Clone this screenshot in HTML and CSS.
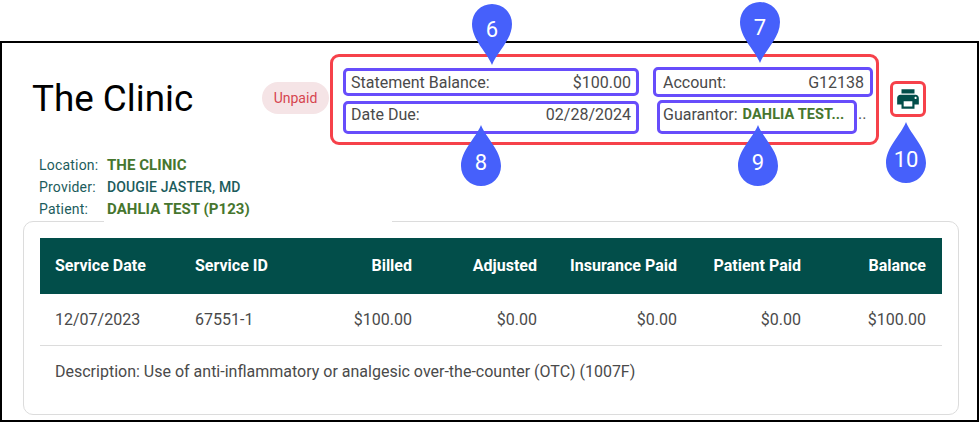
FILE: index.html
```html
<!DOCTYPE html>
<html lang="en">
<head>
<meta charset="utf-8">
<title>The Clinic</title>
<link rel="stylesheet" href="styles.css">
</head>
<body>
<main class="frame">
  <header class="header">
    <div class="intro">
      <div class="title-row">
        <h1 class="title">The Clinic</h1>
        <span class="pill">Unpaid</span>
      </div>
      <div class="meta">
        <div class="meta-labels">
          <div>Location:</div>
          <div>Provider:</div>
          <div>Patient:</div>
        </div>
        <div class="meta-values">
          <div class="green">THE CLINIC</div>
          <div class="teal">DOUGIE JASTER, MD</div>
          <div class="green">DAHLIA TEST (P123)</div>
        </div>
      </div>
    </div>
    <section class="summary">
      <div class="field field-balance"><span>Statement Balance:</span><span>$100.00</span></div>
      <div class="field field-account"><span>Account:</span><span>G12138</span></div>
      <div class="field field-due"><span>Date Due:</span><span>02/28/2024</span></div>
      <div class="guarantor-wrap">
        <div class="field field-guarantor"><span>Guarantor:</span><strong class="guarantor-name">DAHLIA TEST...</strong></div>
        <span class="overflow-dots">..</span>
      </div>
    </section>
    <button class="print" type="button" aria-label="Print">
      <svg class="print-icon" viewBox="0 0 24 24" aria-hidden="true"><path d="M19 8H5c-1.66 0-3 1.34-3 3v6h4v4h12v-4h4v-6c0-1.66-1.34-3-3-3zm-3 11H8v-5h8v5zm3-7c-.55 0-1-.45-1-1s.45-1 1-1 1 .45 1 1-.45 1-1 1zm-1-9H6v4h12V3z"/></svg>
    </button>
  </header>

  <section class="card">
    <table class="services">
      <colgroup>
        <col class="c-date"><col class="c-id"><col class="c-billed"><col class="c-adj"><col class="c-ins"><col class="c-pat"><col class="c-bal">
      </colgroup>
      <thead>
        <tr>
          <th>Service Date</th><th>Service ID</th><th class="num">Billed</th><th class="num">Adjusted</th><th class="num">Insurance Paid</th><th class="num">Patient Paid</th><th class="num">Balance</th>
        </tr>
      </thead>
      <tbody>
        <tr>
          <td>12/07/2023</td><td>67551-1</td><td class="num">$100.00</td><td class="num">$0.00</td><td class="num">$0.00</td><td class="num">$0.00</td><td class="num">$100.00</td>
        </tr>
      </tbody>
    </table>
    <p class="description">Description: Use of anti-inflammatory or analgesic over-the-counter (OTC) (1007F)</p>
  </section>
</main>

<div class="pin pin-6"><svg class="pin-shape" viewBox="0 0 40 61" aria-hidden="true"><path d="M20 61C15 48 0 36 0 20A20 20 0 0 1 40 20C40 36 25 48 20 61Z"/></svg><span class="pin-num">6</span></div>
<div class="pin pin-7"><svg class="pin-shape" viewBox="0 0 40 61" aria-hidden="true"><path d="M20 61C15 48 0 36 0 20A20 20 0 0 1 40 20C40 36 25 48 20 61Z"/></svg><span class="pin-num">7</span></div>
<div class="pin pin-8 pin-up"><svg class="pin-shape" viewBox="0 0 40 61" aria-hidden="true"><path d="M20 61C15 48 0 36 0 20A20 20 0 0 1 40 20C40 36 25 48 20 61Z"/></svg><span class="pin-num">8</span></div>
<div class="pin pin-9 pin-up"><svg class="pin-shape" viewBox="0 0 40 61" aria-hidden="true"><path d="M20 61C15 48 0 36 0 20A20 20 0 0 1 40 20C40 36 25 48 20 61Z"/></svg><span class="pin-num">9</span></div>
<div class="pin pin-10 pin-up"><svg class="pin-shape" viewBox="0 0 40 61" aria-hidden="true"><path d="M20 61C15 48 0 36 0 20A20 20 0 0 1 40 20C40 36 25 48 20 61Z"/></svg><span class="pin-num">10</span></div>
</body>
</html>
```

FILE: styles.css
```css
* { box-sizing: border-box; }

html, body {
  margin: 0;
  height: 422px;
  overflow: hidden;
  background: #fff;
  font-family: Roboto, "Liberation Sans", sans-serif;
}

.frame {
  margin-top: 41px;
  height: 381px;
  width: 979px;
  border: 2px solid #000;
}

.header {
  display: flex;
  align-items: flex-start;
  padding-top: 11px;
  position: relative;
  z-index: 1;
}

.intro { width: 328px; flex: none; }

.title-row {
  display: flex;
  align-items: center;
  margin-top: 24px;
  height: 42px;
  padding-left: 30px;
}

.title {
  margin: 0;
  font-size: 36.8px;
  line-height: 42px;
  font-weight: 400;
  color: #000;
  width: 230px;
  flex: none;
}

.pill {
  width: 67px;
  height: 32px;
  margin-top: -2px;
  border-radius: 16px;
  background: #f5e4e6;
  color: #d6454f;
  font-size: 14px;
  line-height: 32px;
  text-align: center;
}

.meta {
  display: flex;
  margin-top: 34px;
  font-size: 14px;
  line-height: 22px;
  height: 68px;
}

.meta-labels {
  width: 102px;
  padding-left: 37px;
  color: #1c5c5c;
  font-weight: 400;
  letter-spacing: 0.2px;
}

.meta-values {
  width: 288px;
  flex: none;
  margin-right: -62px;
  padding-left: 3px;
  background: #fff;
  position: relative;
}

.green { color: #46762e; font-weight: 700; font-size: 15px; letter-spacing: 0.05px; }
.teal { color: #1c5c5c; font-weight: 500; letter-spacing: 0.12px; }

.summary {
  width: 549px;
  height: 91px;
  flex: none;
  border: 3px solid #f6414a;
  border-radius: 9px;
  padding: 10px 3px 0 10px;
  display: grid;
  grid-template-columns: 296px 220px;
  grid-template-rows: 30px 34px;
  column-gap: 14px;
  row-gap: 3px;
  position: relative;
  font-size: 16px;
  line-height: 20px;
  color: #4a4a4a;
}

.field {
  display: flex;
  justify-content: space-between;
  border: 3px solid #674dfb;
  border-radius: 5px;
  padding: 2px 5px 0;
}

.field-balance { margin: 1px 0; padding-top: 2px; }
.field-due { margin-top: 1px; padding-top: 1px; }
.field-account { padding-left: 7px; padding-right: 6px; padding-top: 3px; }

.guarantor-wrap { display: flex; padding-left: 4px; }

.field-guarantor {
  width: 200px;
  justify-content: flex-start;
  gap: 5px;
  padding-left: 3px;
}

.guarantor-name { color: #46762e; font-weight: 700; font-size: 14.5px; letter-spacing: 0.1px; }

.overflow-dots { padding: 4px 0 0 1px; color: #555; }

.print {
  appearance: none;
  margin: 27px 0 0 11px;
  width: 36px;
  height: 36px;
  padding: 0;
  background: #fff;
  border: 3px solid #f6414a;
  border-radius: 6px;
  display: flex;
  align-items: center;
  justify-content: center;
}

.print-icon { width: 26px; height: 26px; margin-left: -1px; display: block; fill: #024e4a; flex: none; }

.card {
  margin: -1px 0 0 21px;
  width: 936px;
  height: 194px;
  border: 1px solid #dcdcdc;
  border-radius: 10px;
  padding: 16px 16px 0;
  position: relative;
}

.services {
  width: 902px;
  table-layout: fixed;
  border-collapse: collapse;
  font-size: 16px;
}

.c-date { width: 140px; }
.c-id { width: 124px; }
.c-billed { width: 124px; }
.c-adj { width: 125px; }
.c-ins { width: 140px; }
.c-pat { width: 124px; }
.c-bal { width: 125px; }

.services th {
  background: #024e4a;
  color: #fff;
  height: 56px;
  padding: 0 16px 2px 15px;
  font-weight: 700;
  text-align: left;
  white-space: nowrap;
}

.services td {
  height: 51px;
  padding: 0 16px 0 15px;
  color: #4a4a4a;
  font-weight: 400;
  border-bottom: 1px solid #dcdcdc;
  white-space: nowrap;
}

.services .num { text-align: right; }

.description {
  margin: 16px 0 0;
  padding-left: 15px;
  font-size: 16px;
  line-height: 20px;
  color: #4a4a4a;
}

.pin {
  position: absolute;
  width: 40px;
  height: 61px;
  z-index: 2;
}

.pin-shape { display: block; width: 40px; height: 61px; fill: #4660fb; }
.pin-up .pin-shape { transform: scaleY(-1); }

.pin-num {
  position: absolute;
  left: 0;
  right: 0;
  top: 13px;
  text-align: center;
  color: #fff;
  font-size: 22px;
  line-height: 26px;
}

.pin-up .pin-num { top: 25px; }

.pin-6 { left: 472px; top: 4px; }
.pin-7 { left: 740px; top: 2px; }
.pin-8 { left: 461px; top: 125px; }
.pin-9 { left: 738px; top: 125px; }
.pin-10 { left: 886px; top: 122px; }
```
